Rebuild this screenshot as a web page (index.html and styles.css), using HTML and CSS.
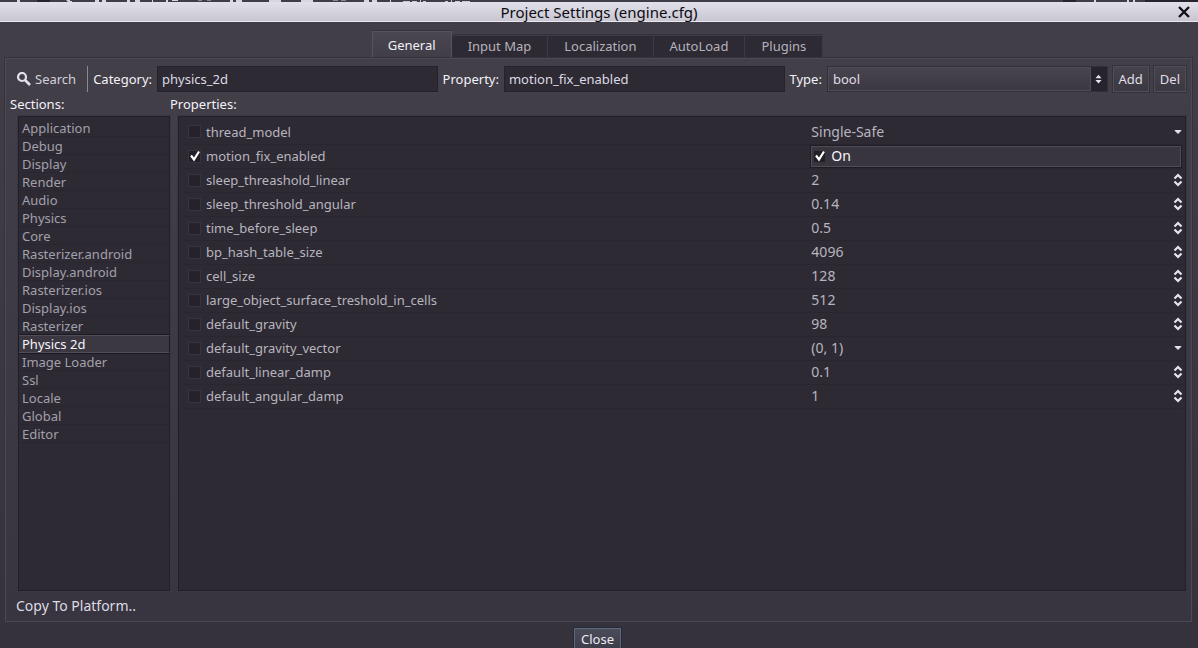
FILE: index.html
```html
<!DOCTYPE html>
<html lang="en">
<head>
<meta charset="utf-8">
<title>Project Settings (engine.cfg)</title>
<link rel="stylesheet" href="styles.css">
</head>
<body>
<svg class="defs" aria-hidden="true">
  <symbol id="spin" viewBox="0 0 10 14"><path d="M1.500 5.500 5 2l3.500 3.500M1.500 8.500 5 12l3.500-3.500" fill="none" stroke="#e6e3ee" stroke-width="2.200"/></symbol>
  <symbol id="down" viewBox="0 0 10 14"><path d="M2 5.500h6L5 8.500z" fill="#e6e3ee" stroke="#e6e3ee" stroke-linejoin="round"/></symbol>
</svg>
<div class="app">
  <div class="backdrop" aria-hidden="true">
    <svg viewBox="0 0 1198 2" preserveAspectRatio="none"><path d="M37 0h13v2H37zM1063 0h13v2h-13zM1145 0h53v2h-53z" fill="#27242d"/><path d="M17 0h3v2h-3zM66 0h4v1h2v1h-4zM95 0h4v2h-4zM102 0h4v2h-4zM127 0h3v2h-3zM135 0h5v2h-5zM152 0h1v2h-1zM166 0h2v2h-2zM172 0h6v1h-6zM230 0h3v2h-3zM236 0h6v2h-6zM269 0h12v2h-12zM301 0h12v2h-12zM364 0h5v2h-5zM372 0h5v2h-5zM390 0h1v2h-1zM1094 0h2v2h-2zM1127 0h2v2h-2zM1133 0h2v2h-2z" fill="#d8d5df"/><path d="M198 0h4v1h-4zM207 0h4v1h-4zM333 0h5v1h-5zM341 0h5v1h-5z" fill="#8b8892"/><path d="M403 1h7v1h-7zM412 1h5v1h-5zM420 0h1v2h-1zM423 1h3v1h-3zM445 1h3v1h-3zM451 0h1v2h-1zM455 1h5v1h-5zM462 1h8v1h-8z" fill="#c9c6d0"/></svg>
  </div>
  <main class="dialog">
    <header class="titlebar">
      <h1>Project Settings (engine.cfg)</h1>
      <button class="dismiss" aria-label="Close window"><svg viewBox="0 0 12 12"><path d="m1 1 10 10m0-10-10 10" stroke="#141218" stroke-width="2.400"/></svg></button>
    </header>
    <nav class="tabs" role="tablist">
      <button class="tab active" role="tab" aria-selected="true">General</button>
      <button class="tab" role="tab">Input Map</button>
      <button class="tab" role="tab">Localization</button>
      <button class="tab" role="tab">AutoLoad</button>
      <button class="tab" role="tab">Plugins</button>
    </nav>
    <section class="panel">
      <form class="toolbar">
        <button type="button" class="search"><svg viewBox="0 0 14 14"><circle cx="5" cy="5" r="4" fill="none" stroke="#e3e0e9" stroke-width="2.200"/><path d="m8 8 5 5" stroke="#e3e0e9" stroke-width="2.600"/></svg>Search</button>
        <label for="category">Category:</label>
        <input class="field" id="category" type="text" value="physics_2d">
        <label for="property">Property:</label>
        <input class="field" id="property" type="text" value="motion_fix_enabled">
        <label for="type">Type:</label>
        <div class="type">
          <select id="type"><option>bool</option></select>
          <span class="stepper"><svg viewBox="0 0 8 10"><path d="M.5 4 4 0l3.500 4zM.5 6 4 10l3.500-4z" fill="#e6e3ee"/></svg></span>
        </div>
        <button type="button" class="btn">Add</button>
        <button type="button" class="btn">Del</button>
      </form>
      <div class="columns">
        <h2>Sections:</h2>
        <h2>Properties:</h2>
        <ul class="well sections">
          <li><button>Application</button></li>
          <li><button>Debug</button></li>
          <li><button>Display</button></li>
          <li><button>Render</button></li>
          <li><button>Audio</button></li>
          <li><button>Physics</button></li>
          <li><button>Core</button></li>
          <li><button>Rasterizer.android</button></li>
          <li><button>Display.android</button></li>
          <li><button>Rasterizer.ios</button></li>
          <li><button>Display.ios</button></li>
          <li><button>Rasterizer</button></li>
          <li><button class="selected">Physics 2d</button></li>
          <li><button>Image Loader</button></li>
          <li><button>Ssl</button></li>
          <li><button>Locale</button></li>
          <li><button>Global</button></li>
          <li><button>Editor</button></li>
        </ul>
        <div class="well properties">
          <table>
            <tbody>
              <tr><td><label><input type="checkbox">thread_model</label></td><td><div class="value"><select aria-label="thread_model value"><option>Single-Safe</option></select><svg class="arrow"><use href="#down"/></svg></div></td></tr>
              <tr><td><label><input type="checkbox" checked>motion_fix_enabled</label></td><td><label class="editing"><input type="checkbox" checked>On</label></td></tr>
              <tr><td><label><input type="checkbox">sleep_threashold_linear</label></td><td><div class="value"><input type="text" aria-label="sleep_threashold_linear value" value="2"><svg class="arrow"><use href="#spin"/></svg></div></td></tr>
              <tr><td><label><input type="checkbox">sleep_threshold_angular</label></td><td><div class="value"><input type="text" aria-label="sleep_threshold_angular value" value="0.14"><svg class="arrow"><use href="#spin"/></svg></div></td></tr>
              <tr><td><label><input type="checkbox">time_before_sleep</label></td><td><div class="value"><input type="text" aria-label="time_before_sleep value" value="0.5"><svg class="arrow"><use href="#spin"/></svg></div></td></tr>
              <tr><td><label><input type="checkbox">bp_hash_table_size</label></td><td><div class="value"><input type="text" aria-label="bp_hash_table_size value" value="4096"><svg class="arrow"><use href="#spin"/></svg></div></td></tr>
              <tr><td><label><input type="checkbox">cell_size</label></td><td><div class="value"><input type="text" aria-label="cell_size value" value="128"><svg class="arrow"><use href="#spin"/></svg></div></td></tr>
              <tr><td><label><input type="checkbox">large_object_surface_treshold_in_cells</label></td><td><div class="value"><input type="text" aria-label="large_object_surface_treshold_in_cells value" value="512"><svg class="arrow"><use href="#spin"/></svg></div></td></tr>
              <tr><td><label><input type="checkbox">default_gravity</label></td><td><div class="value"><input type="text" aria-label="default_gravity value" value="98"><svg class="arrow"><use href="#spin"/></svg></div></td></tr>
              <tr><td><label><input type="checkbox">default_gravity_vector</label></td><td><div class="value"><select aria-label="default_gravity_vector value"><option>(0, 1)</option></select><svg class="arrow"><use href="#down"/></svg></div></td></tr>
              <tr><td><label><input type="checkbox">default_linear_damp</label></td><td><div class="value"><input type="text" aria-label="default_linear_damp value" value="0.1"><svg class="arrow"><use href="#spin"/></svg></div></td></tr>
              <tr><td><label><input type="checkbox">default_angular_damp</label></td><td><div class="value"><input type="text" aria-label="default_angular_damp value" value="1"><svg class="arrow"><use href="#spin"/></svg></div></td></tr>
            </tbody>
          </table>
        </div>
      </div>
      <button class="copy">Copy To Platform..</button>
    </section>
    <footer class="actions"><button class="close">Close</button></footer>
  </main>
</div>
</body>
</html>
```
FILE: styles.css
```css
* { box-sizing: border-box; }
body { margin: 0; background: #3c3943; color: #f4f2f8; font: 13px/18px "Noto Sans", "Open Sans", sans-serif; }
button, input, select { font: inherit; color: inherit; margin: 0; padding: 0; border: 0; border-radius: 0; background: none; appearance: none; }
h1, h2, ul { margin: 0; padding: 0; font-weight: 400; }
ul { list-style: none; }
svg { display: block; flex: none; }
.defs { position: absolute; width: 0; height: 0; }

.app { display: flex; flex-direction: column; height: 100vh; overflow: hidden; }
.backdrop { flex: none; height: 2px; background: #403d47; }
.backdrop svg { width: 100%; height: 2px; }
.dialog { flex: 1; min-height: 0; display: flex; flex-direction: column; background: linear-gradient(#423f49, #35323c); }

.titlebar { flex: none; display: grid; grid-template-columns: 28px 1fr 28px; align-items: center; height: 20px; background: linear-gradient(#e2e0ea, #c8c6d1); border-bottom: 1px solid #e9e7ef; color: #0c0b0f; }
.titlebar h1 { grid-column: 2; font-size: 15px; line-height: 20px; text-align: center; }
.dismiss svg { width: 12px; height: 12px; margin: 0 auto; }

.tabs { flex: none; display: flex; justify-content: center; align-items: flex-end; height: 36px; padding: 9px 3px 0 0; }
.tab { height: 23px; padding: 0 16px 2px; background: #2d2a34; border: 1px solid #3d3a44; border-width: 1px 1px 0 0; box-shadow: 0 -1px #35323c; color: #b5b2bb; }
.tab.active { height: 27px; padding: 0 15px 1px; background: linear-gradient(#4a4752, #403d47); border-color: #57545e; border-width: 1px 1px 0 1px; color: #f2f0f6; }

.panel { flex: 1; min-height: 0; display: flex; flex-direction: column; margin: 0 6px 0 5px; padding: 7px 5px 3px 4px; border: 1px solid #4c4954; box-shadow: 0 0 0 1px #35323b; background: linear-gradient(#423f49, #383540); }
.toolbar { flex: none; display: flex; align-items: center; gap: 5px; height: 26px; }
.search { display: flex; align-items: center; gap: 4px; height: 26px; padding: 0 11px 0 7px; border-right: 1px solid #8b8893; color: #d3d0da; }
.search svg { width: 14px; height: 14px; }
.field, .type { flex: 1 1 20px; min-width: 0; height: 26px; }
.field { padding: 0 4px 1px; background: #2d2a34; border: 1px solid #25222b; color: #dddae3; }
.type { display: flex; border: 1px solid #322f38; }
.type select { flex: 1; min-width: 0; padding: 0 4px; background: linear-gradient(#47444f, #3b3842); border: 1px solid #4f4c57; color: #e0dde6; }
.stepper { display: grid; place-items: center; width: 16px; background: #26232c; }
.stepper svg { width: 7px; height: 10px; }
.btn { height: 26px; padding: 0 5px; background: linear-gradient(#45424c, #3b3842); border: 1px solid #504d58; box-shadow: 0 0 0 1px #35323b; color: #e0dde6; }

.columns { flex: 1; min-height: 0; display: grid; grid-template-columns: 160px 1fr; grid-template-rows: 24px 1fr; }
.columns h2 { font-size: 13px; line-height: 24px; }
.well { min-height: 0; margin-left: 8px; background: #2d2a34; border: 1px solid #221f28; outline: 1px solid #3a3741; }
.sections { padding-top: 2px; }
.sections button { display: block; width: 100%; height: 18px; padding-left: 3px; box-shadow: inset 0 -1px #292630; text-align: left; color: #a3a0aa; }
.sections .selected { background: #3b3842; border-top: 1px solid #504d58; border-bottom: 1px solid #504d58; box-shadow: 0 0 0 1px #1d1a22; line-height: 16px; color: #f6f4fa; }
.properties { padding: 3px 2px 0 5px; }
table { width: 100%; border-collapse: collapse; table-layout: fixed; }
td { height: 24px; padding: 0; border-bottom: 1px solid #292630; }
td:first-child { width: 62.8%; }
td label { display: flex; align-items: center; gap: 5px; padding-left: 4px; color: #b8b5be; }
input[type="checkbox"] { flex: none; width: 13px; height: 13px; background: #25222b; border: 1px solid #37343e; }
input[type="checkbox"]:checked { background: #221f27 url("data:image/svg+xml,%3Csvg xmlns='http://www.w3.org/2000/svg' viewBox='0 0 12 12'%3E%3Cpath d='M2 5.500 5 9.500 10 1.500' fill='none' stroke='white' stroke-width='2.200'/%3E%3C/svg%3E") center / 12px 12px no-repeat; }
td .editing { height: 21px; margin-right: 2px; padding-left: 1px; background: #38353f; border: 1px solid #4f4c57; box-shadow: 0 0 0 1px #1f1c24; color: #f6f4fa; font-size: 14px; }
.value { display: flex; align-items: center; color: #b8b5be; font-size: 14px; }
.value input, .value select { flex: 1; min-width: 0; height: 21px; }
.value input { padding-bottom: 1px; }
.arrow { width: 10px; height: 14px; }

.copy { flex: none; align-self: flex-start; height: 27px; padding-left: 6px; padding-top: 3px; color: #dddae3; font-size: 14px; }
.actions { flex: none; display: flex; justify-content: center; height: 26px; padding: 6px 3px 0 0; }
.close { flex: none; height: 22px; padding: 0 6px; background: linear-gradient(#4b4c5a, #3d3d4a); border: 1px solid #5b6a7d; box-shadow: 0 0 0 1px #25293a; color: #eceaf1; }
```
